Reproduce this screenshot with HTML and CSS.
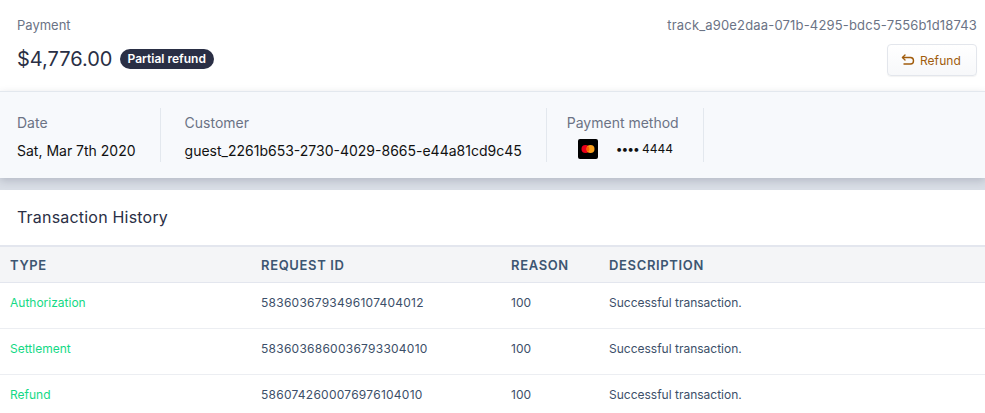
FILE: index.html
```html
<!DOCTYPE html>
<html lang="en">
<head>
    <meta charset="UTF-8">
    <meta name="viewport" content="width=device-width, initial-scale=1.0">
    <title>Payment</title>
    <link rel="stylesheet" href="styles.css">
</head>
<body>
    <header class="payment-header">
        <div class="payment-info">
            <div class="payment-label">Payment</div>
            <div class="payment-amount">
                <span class="amount">$4,776.00</span>
                <span class="badge">Partial refund</span>
            </div>
        </div>
        <div class="payment-actions">
            <div class="track-id">track_a90e2daa-071b-4295-bdc5-7556b1d18743</div>
            <button class="refund-btn">
                <svg class="refund-icon" width="14" height="14" viewBox="0 0 14 14" fill="none" stroke="#a15c0c" stroke-width="1.4" stroke-linecap="round" stroke-linejoin="round">
                    <path d="M4 2 L1.5 4.5 L4 7"/>
                    <path d="M1.5 4.5 H9.5 C11.5 4.5 12.5 6 12.5 7.7 C12.5 9.5 11.5 11 9.5 11 H3"/>
                </svg>
                Refund
            </button>
        </div>
    </header>

    <section class="summary">
        <div class="summary-item">
            <div class="summary-label">Date</div>
            <div class="summary-value">Sat, Mar 7th 2020</div>
        </div>
        <div class="summary-item">
            <div class="summary-label">Customer</div>
            <div class="summary-value">guest_2261b653-2730-4029-8665-e44a81cd9c45</div>
        </div>
        <div class="summary-item">
            <div class="summary-label">Payment method</div>
            <div class="card-row">
                <svg class="card-logo" width="20" height="20" viewBox="0 0 20 20">
                    <rect width="20" height="20" rx="2" fill="#000"/>
                    <circle cx="7.5" cy="10" r="4" fill="#eb001b"/>
                    <circle cx="12.5" cy="10" r="4" fill="#f79e1b"/>
                    <path d="M10 6.9 A4 4 0 0 1 10 13.1 A4 4 0 0 1 10 6.9 Z" fill="#ff5f00"/>
                </svg>
                <span class="card-number"><span class="card-dots">••••</span> 4444</span>
            </div>
        </div>
    </section>
    <div class="strip"></div>

    <h2 class="section-title">Transaction History</h2>

    <table class="history">
        <thead>
            <tr>
                <th class="col-type">Type</th>
                <th class="col-request">Request ID</th>
                <th class="col-reason">Reason</th>
                <th>Description</th>
            </tr>
        </thead>
        <tbody>
            <tr>
                <td class="type-cell">Authorization</td>
                <td class="request-cell">5836036793496107404012</td>
                <td>100</td>
                <td>Successful transaction.</td>
            </tr>
            <tr>
                <td class="type-cell">Settlement</td>
                <td class="request-cell">5836036860036793304010</td>
                <td>100</td>
                <td>Successful transaction.</td>
            </tr>
            <tr>
                <td class="type-cell">Refund</td>
                <td class="request-cell">5860742600076976104010</td>
                <td>100</td>
                <td>Successful transaction.</td>
            </tr>
        </tbody>
    </table>
</body>
</html>
```

FILE: styles.css
```css
html, body {
    height: 413px;
    overflow: hidden;
}
body {
    font-family: Inter, "Liberation Sans", sans-serif;
    background-color: white;
    color: #2a2e45;
    margin: 0;
    padding: 0;
}
.payment-header {
    display: flex;
    justify-content: space-between;
    height: 91px;
    padding: 16px 8px 0 17px;
    box-sizing: border-box;
}
.payment-label {
    font-size: 13px;
    line-height: 18px;
    color: #6b7385;
}
.payment-amount {
    display: flex;
    align-items: center;
    gap: 7px;
    margin-top: 13px;
}
.amount {
    font-size: 20px;
    line-height: 24px;
    color: #2a2f45;
}
.badge {
    background-color: #2a2f45;
    color: white;
    font-size: 12px;
    font-weight: 600;
    line-height: 20px;
    padding: 0 8px;
    border-radius: 10px;
}
.payment-actions {
    display: flex;
    flex-direction: column;
    align-items: flex-end;
}
.track-id {
    font-size: 13px;
    line-height: 18px;
    letter-spacing: 0.17px;
    color: #6b7385;
}
.refund-btn {
    display: flex;
    align-items: center;
    gap: 5px;
    height: 32px;
    margin-top: 10px;
    padding: 0 15px 0 13px;
    font-family: inherit;
    font-size: 12px;
    letter-spacing: 0.1px;
    color: #a15c0c;
    background: linear-gradient(#ffffff, #f7f8fa);
    border: 1px solid #e3e6ec;
    border-radius: 4px;
    box-shadow: 0 1px 1px rgba(0, 0, 0, 0.05);
}
.summary {
    display: flex;
    height: 87px;
    padding: 16px 0 0 0;
    box-sizing: border-box;
    background-color: #f7f9fc;
    border-top: 1px solid #e3e8ee;
    box-shadow: 0 3px 8px rgba(60, 66, 87, 0.22);
    position: relative;
}
.summary-item {
    height: 54px;
    padding: 0 24px 0 24px;
    border-right: 1px solid #e3e8ee;
}
.summary-item:first-child {
    padding: 0 24px 0 17px;
}
.summary-item:last-child {
    padding: 0 24px 0 20px;
}
.summary-label {
    font-size: 14px;
    line-height: 20px;
    margin-top: 5px;
    color: #6b7385;
}
.summary-value {
    font-size: 14px;
    line-height: 20px;
    margin-top: 8px;
    color: #111;
}
.card-row {
    display: flex;
    align-items: center;
    gap: 18px;
    margin-top: 6px;
    padding-left: 11px;
}
.card-number {
    font-size: 12px;
    margin-bottom: 2px;
    color: #111;
}
.card-dots {
    font-size: 12px;
    letter-spacing: -1px;
}
.strip {
    height: 12px;
    background-color: #d9dee6;
}
.section-title {
    margin: 0;
    padding: 17px 17px 0 17px;
    height: 55px;
    box-sizing: border-box;
    font-size: 16px;
    line-height: 20px;
    font-weight: 400;
    letter-spacing: 0.2px;
    color: #2a2f45;
}
.history {
    width: 100%;
    border-collapse: collapse;
    table-layout: fixed;
    border-top: 2px solid #e3e6ee;
}
.history th {
    height: 35px;
    padding: 0 10px;
    text-align: left;
    font-size: 13px;
    font-weight: 600;
    letter-spacing: 0.65px;
    text-transform: uppercase;
    color: #3d5672;
    background-color: #f4f5f7;
    border-bottom: 1px solid #e3e6ee;
}
.history td {
    height: 46px;
    padding: 0 10px 6px 10px;
    box-sizing: border-box;
    font-size: 12px;
    color: #3c4f69;
    border-bottom: 1px solid #eceef2;
}
.history .type-cell {
    color: #14d985;
}
.history .request-cell {
    letter-spacing: 0.25px;
}
.col-type {
    width: 231px;
}
.col-request {
    width: 230px;
}
.col-reason {
    width: 78px;
}
```
